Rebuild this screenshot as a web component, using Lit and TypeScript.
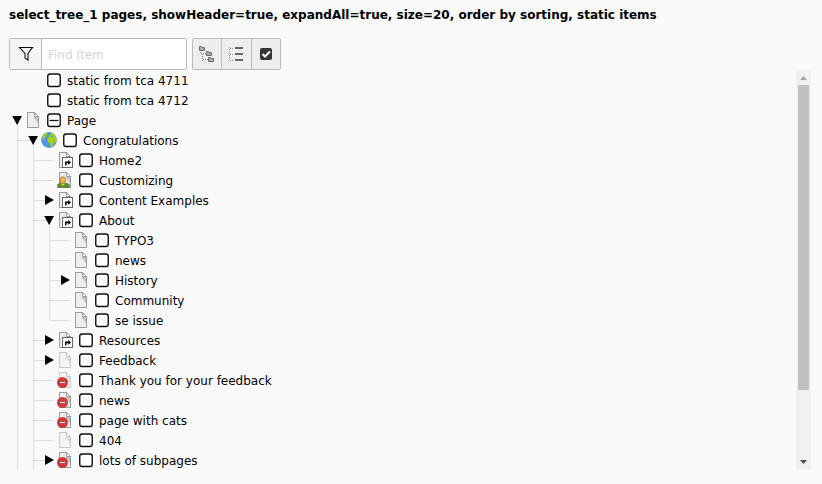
import { LitElement, html, svg, css, nothing } from "lit";
import { customElement } from "lit/decorators.js";

type Icon = "none" | "page" | "pageHidden" | "globe" | "shortcut" | "user" | "stop" | "stopFaded";

interface Item {
  label: string;
  depth: number;
  icon: Icon;
  toggle?: "open" | "closed";
  last?: boolean;
  partial?: boolean;
}

const ITEMS: Item[] = [
  { label: "static from tca 4711", depth: 0, icon: "none" },
  { label: "static from tca 4712", depth: 0, icon: "none" },
  { label: "Page", depth: 0, icon: "page", toggle: "open", partial: true },
  { label: "Congratulations", depth: 1, icon: "globe", toggle: "open" },
  { label: "Home2", depth: 2, icon: "shortcut" },
  { label: "Customizing", depth: 2, icon: "user" },
  { label: "Content Examples", depth: 2, icon: "shortcut", toggle: "closed" },
  { label: "About", depth: 2, icon: "shortcut", toggle: "open" },
  { label: "TYPO3", depth: 3, icon: "page" },
  { label: "news", depth: 3, icon: "page" },
  { label: "History", depth: 3, icon: "page", toggle: "closed" },
  { label: "Community", depth: 3, icon: "page" },
  { label: "se issue", depth: 3, icon: "page", last: true },
  { label: "Resources", depth: 2, icon: "shortcut", toggle: "closed" },
  { label: "Feedback", depth: 2, icon: "pageHidden", toggle: "closed" },
  { label: "Thank you for your feedback", depth: 2, icon: "stopFaded" },
  { label: "news", depth: 2, icon: "stop" },
  { label: "page with cats", depth: 2, icon: "stop" },
  { label: "404", depth: 2, icon: "pageHidden" },
  { label: "lots of subpages", depth: 2, icon: "stop", toggle: "closed" },
];

const sheet = svg`
  <path d="M2.500 .5h7l4 4v11h-11z" fill="#efefef" stroke="#999"/>
  <path d="M8 5l5 6v-6z" fill="#c2c2c2"/>
  <path d="M9.500 .5v4h4z" fill="#fff" stroke="#999"/>`;

const stopBadge = svg`
  <circle cx="5.500" cy="10.500" r="5.500" fill="#c83c3c"/>
  <path d="M3 10.500h5" stroke="#fff" stroke-width="1.100"/>`;

function iconBody(icon: Icon) {
  switch (icon) {
    case "page":
      return sheet;
    case "pageHidden":
      return svg`<g opacity="0.500">${sheet}</g>`;
    case "shortcut":
      return svg`${sheet}
        <rect x="5.500" y="5.500" width="10" height="10" fill="#fff" stroke="#666"/>
        <path d="M8 13.500v-4h3.200v-1.800l2.800 2.700-2.800 2.700v-1.800h-1.700v2.200z" fill="#000"/>`;
    case "user":
      return svg`${sheet}
        <path d="M.4 15.500v-2q0-2 2.500-2.300h6.500q3 .3 3 2.300v2z" fill="#5c8f29" stroke="#6f7b45" stroke-width=".7"/>
        <path d="M4.300 10v2.500l1.500 1.500 1.500-1.500v-2.500z" fill="#f5c36c"/>
        <ellipse cx="5.800" cy="8.200" rx="2.700" ry="3.400" fill="#f5b348" stroke="#98702e" stroke-width=".8"/>`;
    case "stop":
      return svg`${sheet}${stopBadge}`;
    case "stopFaded":
      return svg`<g opacity="0.500">${sheet}</g>${stopBadge}`;
    case "globe":
      return svg`
        <circle cx="8" cy="8" r="7.900" fill="#4f93ea"/>
        <path d="M1.200 5q1.500-3.400 5-4.500l1 1-1.500 1.500-1 2-1.500 1 .2 1.500-1.500.5z" fill="#a5cf12"/>
        <path d="M6.500 6l2-2 .5-2 2.500-1 3 3 1 3-.5 3-2 1-2 3.500-1.700.3-.8-3.800-2-2z" fill="#a5cf12"/>
        <path d="M9.500 4.500l2.500.5" stroke="#4f93ea"/>`;
    default:
      return nothing;
  }
}

@customElement("app-root")
export class AppRoot extends LitElement {
  static styles = css`
    :host {
      display: flex;
      flex-direction: column;
      box-sizing: border-box;
      width: 100%;
      height: 484px;
      padding: 7px 11px 14px 9px;
      overflow: hidden;
      background: #fafafa;
      color: #000;
      font: 12px/16px "DejaVu Sans", sans-serif;
    }
    svg { display: block; flex: none; }
    .title {
      height: 31px;
      font-weight: 700;
      white-space: nowrap;
    }
    .toolbar { display: flex; gap: 5px; height: 32px; flex: none; }
    .group {
      display: flex;
      box-sizing: border-box;
      border: 1px solid #bbb;
      border-radius: 2px;
      overflow: hidden;
    }
    .search { width: 178px; background: #fefefe; }
    .addon {
      display: grid;
      place-items: center;
      width: 31px;
      border-right: 1px solid #bbb;
      background: #f5f5f5;
    }
    .input {
      flex: 1;
      min-width: 0;
      border: 0;
      padding: 1px 0 0 6px;
      background: transparent;
      outline: none;
      font: 12px/16px "DejaVu Sans", sans-serif;
    }
    .input::placeholder { color: #d4d4d4; opacity: 1; }
    .buttons { width: 89px; }
    .button {
      flex: 1;
      display: grid;
      place-items: center;
      padding: 0;
      border: 0;
      background: #eee;
    }
    .button + .button { border-left: 1px solid #bbb; }
    .panel { display: flex; height: 400px; width: 802px; }
    .tree { flex: 1; overflow: hidden; }
    .row { display: flex; height: 20px; align-items: center; }
    .check { margin-left: 5px; }
    .label { margin-left: 5px; padding-top: 1px; white-space: nowrap; }
    .scroll {
      display: flex;
      flex-direction: column;
      align-items: center;
      width: 15px;
      background: #f1f1f1;
    }
    .thumb { width: 11px; height: 305px; background: #c1c1c1; }
    .spacer { flex: 1; }
  `;

  private guides(item: Item) {
    const { depth, toggle, last } = item;
    const columns = Array.from({ length: depth }, (_, i) => i);
    const x = 8 + depth * 16;
    return html`<svg width=${16 + depth * 16} height="20" fill="#ddd">
      ${columns.map((i) => svg`<rect x=${8 + i * 16} y="0" width="1" height=${last && i === depth - 1 ? 11 : 20}></rect>`)}
      ${depth ? svg`<rect x=${x - 16} y="10" width=${toggle ? 16 : 20} height="1"></rect>` : nothing}
      ${toggle === "open" ? svg`<rect x=${x} y="10" width="1" height="10"></rect>` : nothing}
      ${toggle === "open" ? svg`<path d="M${x - 4.8} 6h9.800l-4.900 9z" fill="#000"></path>` : nothing}
      ${toggle === "closed" ? svg`<path d="M${x - 4} 5v10l9-5z" fill="#000"></path>` : nothing}
    </svg>`;
  }

  private row(item: Item) {
    return html`<div class="row">
      ${this.guides(item)}
      <svg width="16" height="16" viewBox="0 0 16 16">${iconBody(item.icon)}</svg>
      <svg class="check" width="16" height="20" viewBox="0 0 16 20">
        <rect x="1.750" y="4.050" width="12.500" height="12.500" rx="2.300" fill="#fff" stroke="#111" stroke-width="1.400"></rect>
        ${item.partial ? svg`<path d="M3.500 10.500h9" stroke="#111" stroke-width="1.300"></path>` : nothing}
      </svg>
      <span class="label">${item.label}</span>
    </div>`;
  }

  private folder(x: number, y: number) {
    return svg`<path d="M${x + 0.5} ${y + 0.5}h2l1 1h2v3h-5z" fill="#aaa" stroke="#6c6c6c"></path>`;
  }

  render() {
    return html`
      <div class="title">select_tree_1 pages, showHeader=true, expandAll=true, size=20, order by sorting, static items</div>
      <div class="toolbar">
        <div class="group search">
          <span class="addon">
            <svg width="16" height="16" viewBox="0 0 16 16">
              <path d="M1.500 1.500h13l-4.500 6v6.700l-3-2.200v-4.500z" fill="none" stroke="#111" stroke-width="1.100"/>
            </svg>
          </span>
          <input class="input" placeholder="Find Item" />
        </div>
        <div class="group buttons">
          <button class="button">
            <svg width="16" height="16" viewBox="0 0 16 16">
              <path d="M1.500 6v2M2 7.500h5M3.500 8v7M4 13.500h5" stroke="#888" stroke-dasharray="1 1" fill="none"/>
              ${this.folder(0, 0)}${this.folder(7, 5)}${this.folder(9, 11)}
            </svg>
          </button>
          <button class="button">
            <svg width="16" height="16" viewBox="0 0 16 16">
              <path d="M1.500 1v14M2 2.500h4M2 8.500h4M2 14.500h4" stroke="#999" stroke-dasharray="1 1" fill="none"/>
              <path d="M7 2h8M7 8h8M7 14h8" stroke="#666" stroke-width="2"/>
            </svg>
          </button>
          <button class="button">
            <svg width="16" height="16" viewBox="0 0 16 16">
              <rect x="2" y="2" width="12" height="12" rx="2" fill="#333"/>
              <path d="M4.500 8l2.500 2.500 5-5" stroke="#fff" stroke-width="2" fill="none"/>
            </svg>
          </button>
        </div>
      </div>
      <div class="panel">
        <div class="tree">${ITEMS.map((item) => this.row(item))}</div>
        <div class="scroll">
          <svg width="15" height="15"><path d="M4 10h7l-3.500-4z" fill="#a3a3a3"/></svg>
          <div class="thumb"></div>
          <div class="spacer"></div>
          <svg width="15" height="15"><path d="M4 5h7l-3.500 4z" fill="#505050"/></svg>
        </div>
      </div>
    `;
  }
}
